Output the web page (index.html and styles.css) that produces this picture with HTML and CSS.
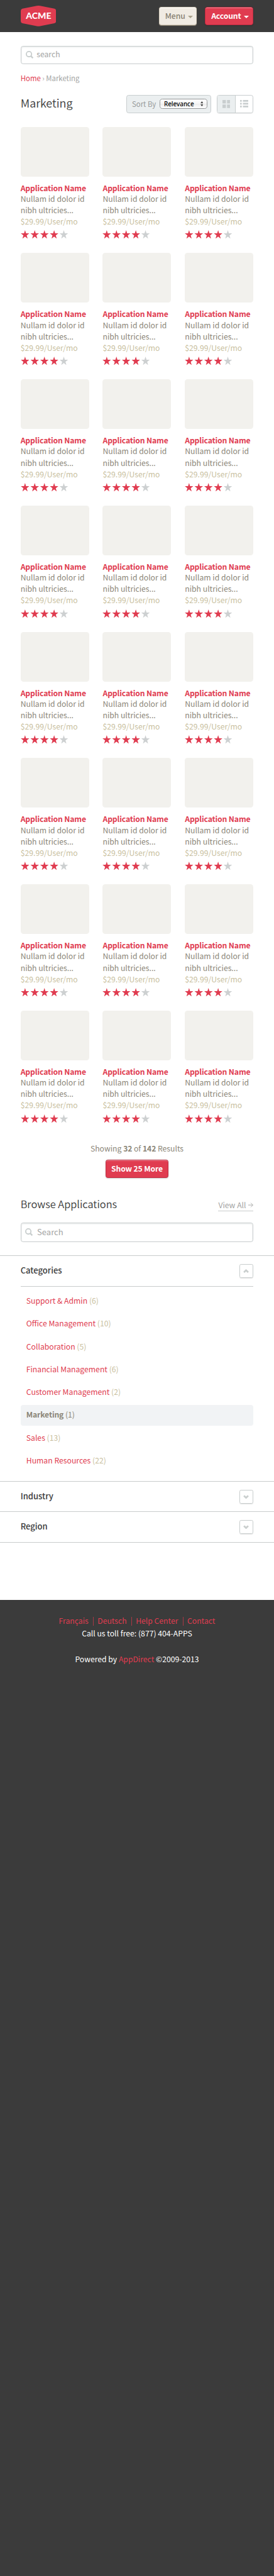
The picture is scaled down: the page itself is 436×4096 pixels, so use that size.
FILE: index.html
```
<!DOCTYPE html>
<html lang="en">
<head>
<meta charset="utf-8">
<title>Marketing</title>
<link rel="stylesheet" href="styles.css">
</head>
<body>
<svg class="defs" width="0" height="0" aria-hidden="true">
  <symbol id="star" viewBox="0 0 15 15"><path d="M7.5 0 9.3 5.5H15L10.4 9 12.100 14.800 7.500 11.300 2.900 14.800 4.600 9 0 5.500H5.700Z"/></symbol>
  <symbol id="rating" viewBox="0 0 83 15">
    <g fill="#e03c50"><use href="#star" width="15" height="15"/><use href="#star" x="17" width="15" height="15"/><use href="#star" x="34" width="15" height="15"/><use href="#star" x="51" width="15" height="15"/></g>
    <use href="#star" x="68" width="15" height="15" fill="#cdd0d1"/>
  </symbol>
  <symbol id="magnifier" viewBox="0 0 14 14"><circle cx="5.6" cy="5.600" r="4.600" fill="none" stroke="#c9cece" stroke-width="2"/><path d="M9 9 12.500 12.500" stroke="#c9cece" stroke-width="2.600"/></symbol>
  <symbol id="chevron" viewBox="0 0 10 7"><path d="M1.200 5.600 5 2 8.800 5.600" fill="none" stroke="#cacfce" stroke-width="3"/></symbol>
</svg>
<div class="page">
  <header class="header">
    <svg class="logo" width="62" height="36" viewBox="0 0 62 36"><path d="M3 5.200 28 .3Q31 -.2 34 .3L59 5.200Q62 6 62 9V27Q62 30 59 30.800L34 35.700Q31 36.200 28 35.700L3 30.800Q0 30 0 27V9Q0 6 3 5.200Z" fill="#e03c50"/><text class="logo-text" x="9" y="23.600" textLength="44.500">ACME</text></svg>
    <a class="btn btn-menu">Menu<i class="caret"></i></a>
    <a class="btn btn-red btn-account">Account<i class="caret"></i></a>
  </header>
  <div class="field field-top"><svg class="mag" width="14" height="14"><use href="#magnifier"/></svg><span>search</span></div>
  <nav class="crumbs"><a>Home</a> › Marketing</nav>
  <div class="toolbar">
    <h1>Marketing</h1>
    <div class="sort">Sort By<span class="select">Relevance<svg width="5" height="9" viewBox="0 0 5 9"><path d="M0 3.500 2.500 0 5 3.500ZM0 5.500H5L2.500 9Z" fill="#444"/></svg></span></div>
    <div class="toggle">
      <span class="tog on"><svg width="14" height="14"><path d="M0 0h6v6H0zM8 0h6v6H8zM0 8h6v6H0zM8 8h6v6H8z" fill="#c9cecf"/></svg></span>
      <span class="tog"><svg width="15" height="13"><path d="M0 0h3v3H0zM5 0h10v3H5zM0 5h3v3H0zM5 5h10v3H5zM0 10h3v3H0zM5 10h10v3H5z" fill="#c9cecf"/></svg></span>
    </div>
  </div>
  <main class="apps">
    <article class="app"><div class="thumb"></div><h2>Application Name</h2><p>Nullam id dolor id nibh ultricies...</p><p class="price">$29.99/User/mo</p><svg class="stars"><use href="#rating"/></svg></article>
    <article class="app"><div class="thumb"></div><h2>Application Name</h2><p>Nullam id dolor id nibh ultricies...</p><p class="price">$29.99/User/mo</p><svg class="stars"><use href="#rating"/></svg></article>
    <article class="app"><div class="thumb"></div><h2>Application Name</h2><p>Nullam id dolor id nibh ultricies...</p><p class="price">$29.99/User/mo</p><svg class="stars"><use href="#rating"/></svg></article>
    <article class="app"><div class="thumb"></div><h2>Application Name</h2><p>Nullam id dolor id nibh ultricies...</p><p class="price">$29.99/User/mo</p><svg class="stars"><use href="#rating"/></svg></article>
    <article class="app"><div class="thumb"></div><h2>Application Name</h2><p>Nullam id dolor id nibh ultricies...</p><p class="price">$29.99/User/mo</p><svg class="stars"><use href="#rating"/></svg></article>
    <article class="app"><div class="thumb"></div><h2>Application Name</h2><p>Nullam id dolor id nibh ultricies...</p><p class="price">$29.99/User/mo</p><svg class="stars"><use href="#rating"/></svg></article>
    <article class="app"><div class="thumb"></div><h2>Application Name</h2><p>Nullam id dolor id nibh ultricies...</p><p class="price">$29.99/User/mo</p><svg class="stars"><use href="#rating"/></svg></article>
    <article class="app"><div class="thumb"></div><h2>Application Name</h2><p>Nullam id dolor id nibh ultricies...</p><p class="price">$29.99/User/mo</p><svg class="stars"><use href="#rating"/></svg></article>
    <article class="app"><div class="thumb"></div><h2>Application Name</h2><p>Nullam id dolor id nibh ultricies...</p><p class="price">$29.99/User/mo</p><svg class="stars"><use href="#rating"/></svg></article>
    <article class="app"><div class="thumb"></div><h2>Application Name</h2><p>Nullam id dolor id nibh ultricies...</p><p class="price">$29.99/User/mo</p><svg class="stars"><use href="#rating"/></svg></article>
    <article class="app"><div class="thumb"></div><h2>Application Name</h2><p>Nullam id dolor id nibh ultricies...</p><p class="price">$29.99/User/mo</p><svg class="stars"><use href="#rating"/></svg></article>
    <article class="app"><div class="thumb"></div><h2>Application Name</h2><p>Nullam id dolor id nibh ultricies...</p><p class="price">$29.99/User/mo</p><svg class="stars"><use href="#rating"/></svg></article>
    <article class="app"><div class="thumb"></div><h2>Application Name</h2><p>Nullam id dolor id nibh ultricies...</p><p class="price">$29.99/User/mo</p><svg class="stars"><use href="#rating"/></svg></article>
    <article class="app"><div class="thumb"></div><h2>Application Name</h2><p>Nullam id dolor id nibh ultricies...</p><p class="price">$29.99/User/mo</p><svg class="stars"><use href="#rating"/></svg></article>
    <article class="app"><div class="thumb"></div><h2>Application Name</h2><p>Nullam id dolor id nibh ultricies...</p><p class="price">$29.99/User/mo</p><svg class="stars"><use href="#rating"/></svg></article>
    <article class="app"><div class="thumb"></div><h2>Application Name</h2><p>Nullam id dolor id nibh ultricies...</p><p class="price">$29.99/User/mo</p><svg class="stars"><use href="#rating"/></svg></article>
    <article class="app"><div class="thumb"></div><h2>Application Name</h2><p>Nullam id dolor id nibh ultricies...</p><p class="price">$29.99/User/mo</p><svg class="stars"><use href="#rating"/></svg></article>
    <article class="app"><div class="thumb"></div><h2>Application Name</h2><p>Nullam id dolor id nibh ultricies...</p><p class="price">$29.99/User/mo</p><svg class="stars"><use href="#rating"/></svg></article>
    <article class="app"><div class="thumb"></div><h2>Application Name</h2><p>Nullam id dolor id nibh ultricies...</p><p class="price">$29.99/User/mo</p><svg class="stars"><use href="#rating"/></svg></article>
    <article class="app"><div class="thumb"></div><h2>Application Name</h2><p>Nullam id dolor id nibh ultricies...</p><p class="price">$29.99/User/mo</p><svg class="stars"><use href="#rating"/></svg></article>
    <article class="app"><div class="thumb"></div><h2>Application Name</h2><p>Nullam id dolor id nibh ultricies...</p><p class="price">$29.99/User/mo</p><svg class="stars"><use href="#rating"/></svg></article>
    <article class="app"><div class="thumb"></div><h2>Application Name</h2><p>Nullam id dolor id nibh ultricies...</p><p class="price">$29.99/User/mo</p><svg class="stars"><use href="#rating"/></svg></article>
    <article class="app"><div class="thumb"></div><h2>Application Name</h2><p>Nullam id dolor id nibh ultricies...</p><p class="price">$29.99/User/mo</p><svg class="stars"><use href="#rating"/></svg></article>
    <article class="app"><div class="thumb"></div><h2>Application Name</h2><p>Nullam id dolor id nibh ultricies...</p><p class="price">$29.99/User/mo</p><svg class="stars"><use href="#rating"/></svg></article>
  </main>
  <div class="more">
    <p>Showing <b>32</b> of <b>142</b> Results</p>
    <a class="btn btn-red btn-more">Show 25 More</a>
  </div>
  <div class="browse"><h2>Browse Applications</h2><a>View All <svg width="9" height="9" viewBox="0 0 9 9"><path d="M0 4.500H8M4.500 .8 8.200 4.500 4.500 8.200" fill="none" stroke="#a3a4a3"/></svg></a></div>
  <div class="field field-browse"><svg class="mag" width="14" height="14"><use href="#magnifier"/></svg><span>Search</span></div>
  <section class="group group-open">
    <div class="group-head"><h3>Categories</h3><span class="fold"><svg width="10" height="7"><use href="#chevron"/></svg></span></div>
    <ul class="cats">
      <li><a>Support &amp; Admin</a> (6)</li>
      <li><a>Office Management</a> (10)</li>
      <li><a>Collaboration</a> (5)</li>
      <li><a>Financial Management</a> (6)</li>
      <li><a>Customer Management</a> (2)</li>
      <li class="current"><b>Marketing</b> (1)</li>
      <li><a>Sales</a> (13)</li>
      <li><a>Human Resources</a> (22)</li>
    </ul>
  </section>
  <section class="group"><div class="group-head"><h3>Industry</h3><span class="fold down"><svg width="10" height="7"><use href="#chevron"/></svg></span></div></section>
  <section class="group group-last"><div class="group-head"><h3>Region</h3><span class="fold down"><svg width="10" height="7"><use href="#chevron"/></svg></span></div></section>
  <footer class="footer">
    <p class="links"><a>Français</a><i></i><a>Deutsch</a><i></i><a>Help Center</a><i></i><a>Contact</a></p>
    <p>Call us toll free: (877) 404-APPS</p>
    <p class="powered">Powered by <a>AppDirect</a> ©2009-2013</p>
  </footer>
</div>
</body>
</html>
```
FILE: styles.css
```
* { box-sizing: border-box; margin: 0; padding: 0; }
html { background: #3b3b3b; }
body { font-family: "Noto Sans CJK SC", sans-serif; overflow-x: hidden; }
svg { display: block; flex: none; }
.defs { position: absolute; }

.page { display: flex; flex-direction: column; zoom: 0.90833; width: 480px; height: 4509px; background: #fff; font-size: 13.45px; line-height: 20px; color: #8b8678; }
.page > * { flex: none; }

.header { display: flex; align-items: flex-start; height: 56px; padding: 10px 36px 0; background: #3b3b3b; }
.logo-text { font: 900 15.5px Lato, sans-serif; fill: #fff; }
.btn { display: flex; align-items: center; height: 32px; padding-bottom: 1px; border: 1px solid; border-radius: 4px; font-weight: 700; line-height: 29px; letter-spacing: -0.17px; white-space: nowrap; }
.btn-menu { width: 66px; margin: 2px 14px 0 auto; padding-left: 9px; background: #f0ebe3; border-color: #d8cfc0; color: #878172; font-weight: 500; letter-spacing: 0; box-shadow: inset 0 1px #fff, 0 1px 1px #8f8776; }
.btn-red { background: #e03c50; border-color: #bd2c40; color: #fff; box-shadow: inset 0 1px #f28b98, 0 1px 2px rgba(0,0,0,.2); }
.btn-account { width: 85px; margin-top: 2px; padding-left: 10px; }
.caret { margin: 4px 0 0 5px; border: 4.500px solid transparent; border-top: 5px solid; border-bottom: 0; }
.btn-menu .caret { color: #aaa28c; }

.field { display: flex; align-items: center; margin: 0 36px; border: 1px solid #c9cecf; border-radius: 4px; color: #a3a4a3; box-shadow: inset 0 1px 3px #e3e6e6; }
.field-top { height: 32px; margin-top: 24px; padding-left: 8px; gap: 5px; }
.field-top span { margin-bottom: 2px; }
.crumbs { height: 20px; margin: 15px 36px 0; font-size: 12.56px; color: #a3a4a3; }
.crumbs a, .cats a, .footer a { color: #e03c50; }

.toolbar { display: flex; height: 32px; margin: 19px 36px 24px; }
.toolbar h1 { flex: 1; font-size: 19.8px; font-weight: 350; line-height: 28px; color: #3b3b3b; }
.sort { display: flex; align-items: center; width: 149px; height: 32px; padding-left: 9px; border: 1px solid #c9cecf; border-radius: 4px; background: #ebeff0; font-size: 12.56px; color: #979a9a; }
.select { display: flex; align-items: center; justify-content: space-between; width: 84px; height: 18px; margin-left: 6px; padding: 0 6px 0 7px; border: 1px solid #969899; border-radius: 5px; background: linear-gradient(#fff, #f5f5f5 50%, #ececec 50%, #fff); font: 500 10.900px/16px "Noto Sans", sans-serif; color: #000; }
.toggle { display: flex; width: 64px; height: 32px; margin-left: 10px; border: 1px solid #c9cecf; border-radius: 4px; box-shadow: 0 1px 1px #eee; }
.tog { display: flex; flex: 1; align-items: center; justify-content: center; }
.tog.on { border-right: 1px solid #c9cecf; border-radius: 3px 0 0 3px; background: #ebeff0; }

.apps { display: grid; grid-template-columns: repeat(3, 120px); grid-auto-rows: 221px; column-gap: 24px; height: 1768px; margin: 0 36px; }
.thumb { height: 87px; margin-bottom: 10px; border-radius: 5px; background: #f2f1ed; }
.app h2 { height: 19px; font-size: 13.45px; font-weight: 700; line-height: 20px; letter-spacing: -0.17px; color: #e03c50; white-space: nowrap; }
.price { color: #c9bf9f; }
.stars { width: 83px; height: 15px; margin-top: 5.5px; }

.more { display: flex; flex-direction: column; align-items: center; height: 90px; padding-top: 10px; }
.more p { height: 30px; }
.more b { font-weight: 700; letter-spacing: -0.17px; }
.btn-more { width: 110px; justify-content: center; }

.browse { display: flex; align-items: flex-end; justify-content: space-between; height: 38px; margin: 2px 36px 0; }
.browse h2 { height: 24px; font-size: 18.05px; font-weight: 350; line-height: 24px; color: #3b3b3b; }
.browse a { display: flex; align-items: center; gap: 4px; height: 19px; border-bottom: 1.500px solid #c9cccc; color: #a3a4a3; line-height: 18px; }
.field-browse { height: 34px; margin-top: 20px; margin-bottom: 24px; padding-left: 7px; gap: 7px; font-size: 14.35px; }

.group { border-top: 1px solid #c9cccc; }
.group-head { display: flex; align-items: center; justify-content: space-between; height: 52px; margin: 0 36px; }
.group h3 { margin-bottom: 2px; font-size: 14.35px; font-weight: 500; color: #3b3b3b; }
.fold { display: flex; align-items: center; justify-content: center; width: 25px; height: 25px; border: 1px solid #c9cece; border-radius: 3px; box-shadow: 0 1px 1px #e5e5e5; }
.fold.down svg { transform: scaleY(-1); }
.group-last { border-bottom: 1px solid #c9cccc; }
.cats { height: 342px; margin: 0 36px; padding-top: 8px; border-top: 1px solid #c9cccc; list-style: none; color: #c9bf9f; }
.cats li { height: 36px; margin-bottom: 4px; padding-left: 10px; border-radius: 4px; line-height: 35px; }
.cats .current { background: #f1f3f5; color: #8b8678; }
.cats b { font-weight: 700; letter-spacing: -0.17px; }

.page > .footer { flex: 1; margin-top: 100px; padding-top: 27px; background: #3b3b3b; color: #fff; text-align: center; line-height: 22px; }
.links { display: flex; align-items: center; justify-content: center; gap: 7px; }
.links i { width: 1px; height: 15px; margin: 0 0 0 1px; background: #a93745; }
.powered { margin-top: 23px; }
```
